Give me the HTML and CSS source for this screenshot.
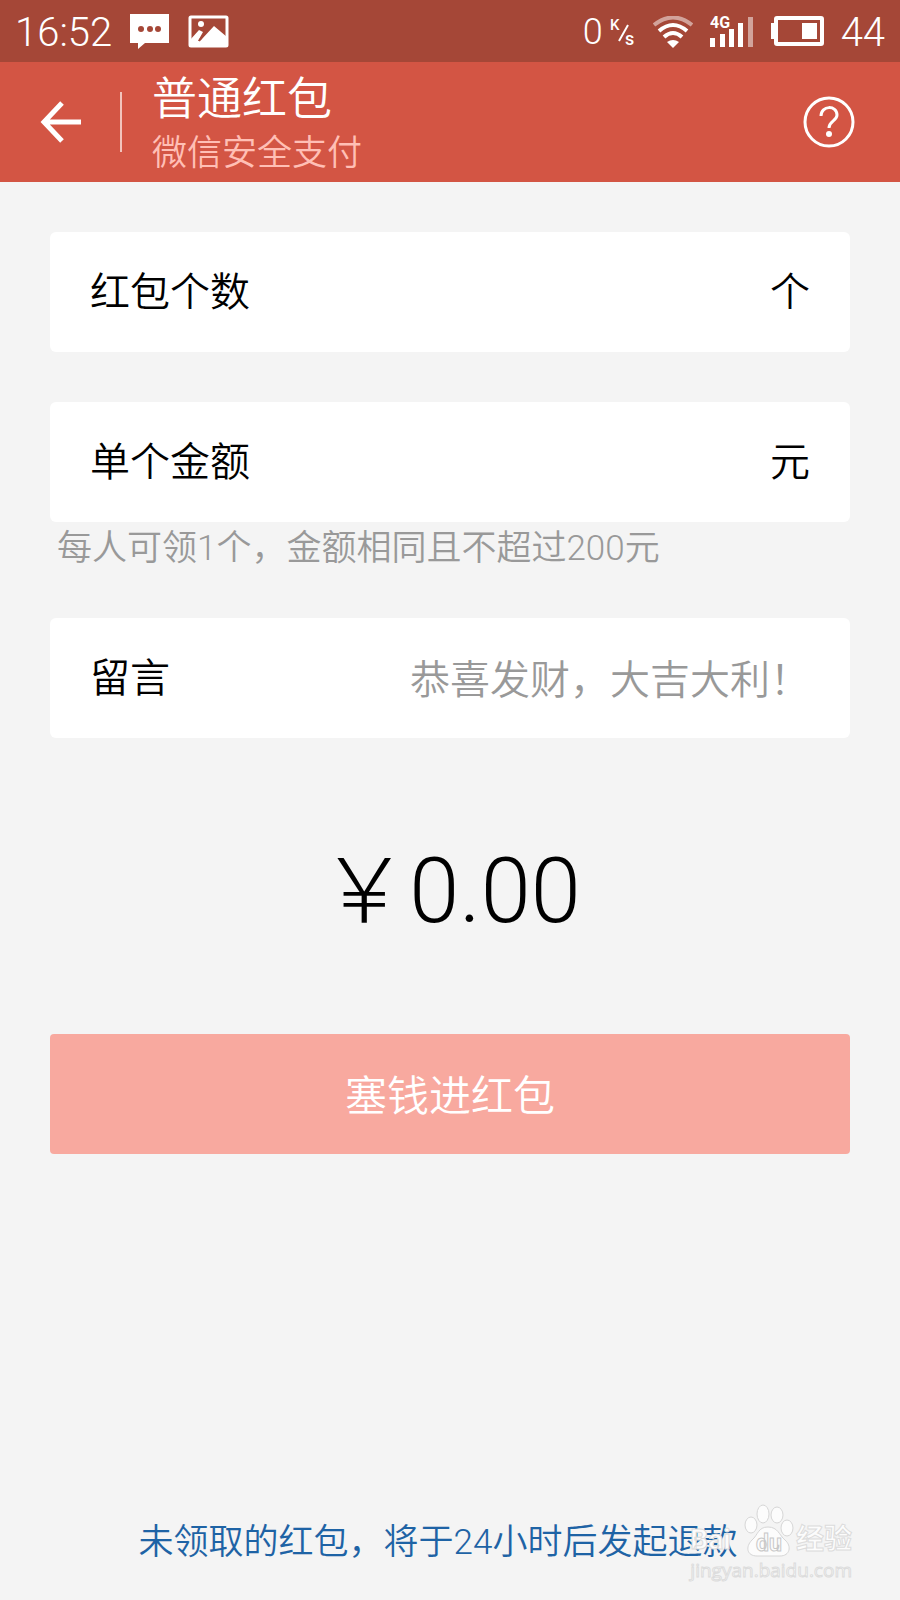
FILE: index.html
```
<!DOCTYPE html>
<html lang="zh-CN">
<head>
    <meta charset="UTF-8">
    <meta name="viewport" content="width=device-width, initial-scale=1.0">
    <title>普通红包</title>
    <link rel="stylesheet" href="styles.css">
</head>
<body>

    <div class="status-bar">
        <div class="status-left">
            <span>16:52</span>
            <svg width="40" height="36" viewBox="0 0 40 36">
                <path fill="#fff" d="M0 0h39v29H15L8 35V29H0z"/>
                <g fill="#a54737"><circle cx="11" cy="15" r="3"/><circle cx="20" cy="15" r="3"/><circle cx="28" cy="15" r="3"/></g>
            </svg>
            <svg width="42" height="34" viewBox="0 0 42 34">
                <rect x="2" y="2" width="37" height="29" rx="1" fill="none" stroke="#fff" stroke-width="3"/>
                <circle cx="13" cy="9" r="3" fill="#fff"/>
                <path fill="#fff" d="M2 25l9-10 4 2-5 9 3-1 13-14 13 11v9H2z"/>
                <path d="M11 26l6-8" stroke="#a54737" stroke-width="2"/>
            </svg>
        </div>
        <div class="status-right">
            <span class="speed">0</span>
            <svg class="unit" width="26" height="32" viewBox="0 0 26 32">
                <text x="0" y="14" font-size="15">K</text>
                <path d="M9 25L18 9" stroke="#fff" stroke-width="2"/>
                <text x="15" y="29" font-size="18">s</text>
            </svg>
            <svg class="wifi" width="40" height="32" viewBox="0 0 40 32" fill="none" stroke="#fff" stroke-width="4">
                <path d="M1 9Q20 -6 39 9" opacity=".5"/>
                <path d="M6 15Q20 3 34 15"/>
                <path d="M11 21Q20 13 29 21"/>
                <path d="M14 26Q20 22 26 26L20 32z" fill="#fff" stroke="none"/>
            </svg>
            <svg class="signal" width="44" height="40" viewBox="0 0 44 40" fill="#fff">
                <text x="0" y="16" font-size="16">4G</text>
                <path d="M0 26h5v9H0zM10 22h5v13h-5zM19 17h5v18h-5zM28 11h5v24h-5z"/>
                <path d="M38 5h5v30h-5z" opacity=".5"/>
            </svg>
            <svg class="battery" width="53" height="32" viewBox="0 0 53 32">
                <rect x="5" y="2" width="46" height="26" rx="1" fill="none" stroke="#fff" stroke-width="4"/>
                <path fill="#fff" d="M0 7h4v16H0zM31 7h15v16H31z"/>
            </svg>
            <span>44</span>
        </div>
    </div>

    <header class="header">
        <a class="back" href="#" aria-label="返回">
            <svg width="42" height="42" viewBox="0 0 42 42" fill="none" stroke="#fff" stroke-width="5">
                <path d="M22 2L4 21l18 19M4 21h37"/>
            </svg>
        </a>
        <div class="title">
            <h1>普通红包</h1>
            <p>微信安全支付</p>
        </div>
        <button class="help" type="button" aria-label="帮助">
            <svg width="54" height="54" viewBox="0 0 54 54" fill="none" stroke="#fff" stroke-width="3">
                <circle cx="27" cy="27" r="24"/>
                <path d="M19 21C19 10 35 10 35 20C35 26 27 26 27 33"/>
                <circle cx="27" cy="39" r="3" fill="#fff" stroke="none"/>
            </svg>
        </button>
    </header>

    <form class="packet">
        <div class="field">
            <label for="count">红包个数</label>
            <input type="text" id="count" inputmode="numeric">
            <span>个</span>
        </div>
        <div class="field">
            <label for="amount">单个金额</label>
            <input type="text" id="amount" inputmode="decimal">
            <span>元</span>
        </div>
        <p class="hint">每人可领1个，金额相同且不超过200元</p>
        <div class="field">
            <label for="message">留言</label>
            <input type="text" id="message" placeholder="恭喜发财，大吉大利！">
        </div>
        <div class="total">￥0.00</div>
        <button class="submit" type="button">塞钱进红包</button>
    </form>

    <footer class="footer">
        <p>未领取的红包，将于24小时后发起退款</p>
        <div class="watermark">
            <div class="logo">
                <span>Bai</span>
                <svg width="50" height="54" viewBox="0 0 50 54">
                    <g fill="#fcfcfc" stroke="#d6d6d6">
                        <ellipse cx="7" cy="21" rx="6" ry="8"/>
                        <ellipse cx="19" cy="10" rx="6" ry="9"/>
                        <ellipse cx="33" cy="11" rx="6" ry="8"/>
                        <ellipse cx="43" cy="24" rx="6" ry="8"/>
                        <path d="M24 23C34 23 35 31 41 36C48 42 46 52 36 52H13C3 52 1 43 8 36C14 31 14 23 24 23z"/>
                    </g>
                    <text x="25" y="47" text-anchor="middle">du</text>
                </svg>
                <span>经验</span>
            </div>
            <div class="site">jingyan.baidu.com</div>
        </div>
    </footer>

</body>
</html>
```
FILE: styles.css
```
* {
    margin: 0;
    padding: 0;
    box-sizing: border-box;
}

body {
    font-family: Roboto, "Noto Sans CJK SC", sans-serif;
    font-weight: 350;
    display: flex;
    flex-direction: column;
    min-height: 100vh;
    background-color: #f4f4f4;
    color: #000;
}

svg {
    display: block;
}

.status-bar {
    display: flex;
    justify-content: space-between;
    align-items: center;
    height: 62px;
    padding: 2px 15px 0;
    background-color: #a54737;
    color: #fff;
    font-size: 40px;
    font-weight: 300;
}

.status-left,
.status-right {
    display: flex;
    align-items: center;
    gap: 18px;
}

.status-right {
    gap: 17px;
}

.speed {
    font-size: 36px;
}

.unit {
    margin-left: -10px;
    fill: #fff;
    font-weight: 500;
}

.signal {
    font-weight: 700;
}

.header {
    display: flex;
    align-items: center;
    height: 120px;
    padding: 0 44px 0 40px;
    background-color: #d35544;
    color: #fff;
}

.back {
    padding: 9px 38px 9px 0;
    border-right: 2px solid #f2c4bd;
}

.title {
    flex: 1;
    padding: 8px 0 0 30px;
}

.title h1 {
    font-size: 45px;
    line-height: 56px;
    font-weight: inherit;
}

.title p {
    font-size: 35px;
    line-height: 52px;
    color: #ffbfb5;
}

.help {
    border: none;
    background: none;
    cursor: pointer;
}

.packet {
    padding: 50px 50px 0;
}

.field {
    display: flex;
    align-items: center;
    height: 120px;
    margin-bottom: 50px;
    padding: 0 40px;
    border-radius: 6px;
    background-color: #fff;
    font-size: 40px;
}

.field label,
.field span {
    padding-bottom: 6px;
}

.field input {
    flex: 1;
    min-width: 0;
    padding-top: 4px;
    border: none;
    outline: none;
    background: none;
    font: inherit;
    text-align: right;
}

.field input::placeholder {
    color: #999;
}

.hint {
    margin: -50px 0 44px;
    padding: 2px 0 0 7px;
    font-size: 35px;
    line-height: 50px;
    color: #999;
}

.total {
    margin: 95px 0 83px;
    font-size: 90px;
    font-weight: 300;
    line-height: 118px;
    text-align: center;
}

.submit {
    display: block;
    width: 100%;
    height: 120px;
    padding-bottom: 4px;
    border: none;
    border-radius: 4px;
    background-color: #f8a99f;
    color: #fff;
    font: inherit;
    font-size: 42px;
    cursor: pointer;
}

.footer {
    position: relative;
    margin-top: auto;
    padding-bottom: 31px;
    text-align: center;
    color: #1e63a5;
    font-size: 35px;
    line-height: 52px;
}

.footer p {
    padding-right: 24px;
}

/* sits over the end of the refund note */
.watermark {
    position: absolute;
    right: 48px;
    bottom: 18px;
    color: #fcfcfc;
    font-weight: 700;
    -webkit-text-stroke: 1px #dcdcdc;
}

.logo {
    display: flex;
    justify-content: space-between;
    align-items: flex-end;
    font-size: 28px;
    line-height: 36px;
}

.logo svg {
    margin-left: 12px;
}

.logo text {
    fill: #fcfcfc;
    stroke: #c8c8c8;
    font-size: 23px;
}

.site {
    font-family: "Open Sans", sans-serif;
    font-size: 19px;
    line-height: 24px;
    font-weight: 400;
}
```
